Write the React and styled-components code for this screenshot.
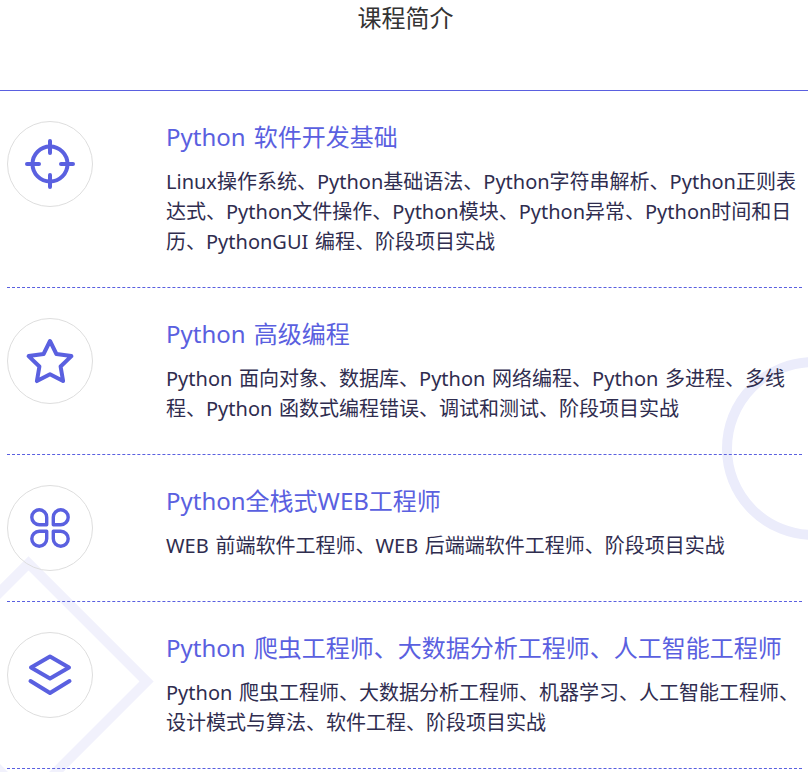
import React from "react";
import styled, { createGlobalStyle } from "styled-components";

const GlobalStyle = createGlobalStyle`
  html, body {
    margin: 0;
    padding: 0;
    background: #fff;
  }
  body {
    font-family: "Noto Sans", "Noto Sans CJK SC", sans-serif;
    font-kerning: none;
  }
`;

const courses = [
  {
    icon: "target",
    title: "Python 软件开发基础",
    text: "Linux操作系统、Python基础语法、Python字符串解析、Python正则表达式、Python文件操作、Python模块、Python异常、Python时间和日历、PythonGUI 编程、阶段项目实战"
  },
  {
    icon: "star",
    title: "Python 高级编程",
    text: "Python 面向对象、数据库、Python 网络编程、Python 多进程、多线程、Python 函数式编程错误、调试和测试、阶段项目实战"
  },
  {
    icon: "clover",
    title: "Python全栈式WEB工程师",
    text: "WEB 前端软件工程师、WEB 后端端软件工程师、阶段项目实战"
  },
  {
    icon: "layers",
    title: "Python 爬虫工程师、大数据分析工程师、人工智能工程师",
    text: "Python 爬虫工程师、大数据分析工程师、机器学习、人工智能工程师、设计模式与算法、软件工程、阶段项目实战"
  }
];

const CourseIcon = ({ name }) => {
  if (name === "target") {
    return (
      <IconSvg viewBox="0 0 50 50">
        <circle cx="25" cy="25" r="17.5" />
        <path d="M25 2v12M25 36v12M2 25h12M36 25h12" />
      </IconSvg>
    );
  }
  if (name === "star") {
    return (
      <IconSvg viewBox="0 0 50 50">
        <path d="M25 5l6.4 13 15 2.1-10.8 10.4 2.5 14.6-13.1-6.9-13.1 6.9 2.5-14.6L3.6 20.1l15-2.1z" />
      </IconSvg>
    );
  }
  if (name === "clover") {
    return (
      <IconSvg viewBox="0 0 50 50" $thin>
        <path d="M21.7 21.7H14.25A7.45 7.45 0 1 1 21.7 14.25Z" />
        <path d="M28.3 21.7H35.75A7.45 7.45 0 1 0 28.3 14.25Z" />
        <path d="M21.7 28.3H14.25A7.45 7.45 0 1 0 21.7 35.75Z" />
        <path d="M28.3 28.3H35.75A7.45 7.45 0 1 1 28.3 35.75Z" />
      </IconSvg>
    );
  }
  return (
    <IconSvg viewBox="0 0 50 50">
      <path d="M25 6.5l19 11-19 11-19-11z" />
      <path d="M5.5 31l19.5 12 19.5-12" />
    </IconSvg>
  );
};

const App = () => (
  <Page>
    <GlobalStyle />
    <Ring />
    <Diamond />
    <Heading>课程简介</Heading>
    <CourseList>
      {courses.map(course => (
        <CourseRow key={course.title}>
          <IconCircle>
            <CourseIcon name={course.icon} />
          </IconCircle>
          <CourseBody>
            <CourseTitle>{course.title}</CourseTitle>
            <CourseText>{course.text}</CourseText>
          </CourseBody>
        </CourseRow>
      ))}
    </CourseList>
  </Page>
);

export default App;

const Page = styled.div`
  position: relative;
  height: 772px;
  overflow: hidden;
  background: #fff;
`;

const Ring = styled.div`
  position: absolute;
  left: 722px;
  top: 357px;
  width: 183px;
  height: 183px;
  box-sizing: border-box;
  border: 10px solid #ebecfb;
  border-radius: 50%;
`;

const Diamond = styled.div`
  position: absolute;
  left: -60px;
  top: 593px;
  width: 177px;
  height: 177px;
  box-sizing: border-box;
  border: 10px solid #f1f1fc;
  transform: rotate(45deg);
`;

const Heading = styled.h2`
  position: relative;
  box-sizing: border-box;
  height: 91px;
  margin: 0;
  padding-left: 3px;
  border-bottom: 1px solid #5a60e0;
  color: #333;
  font-size: 24px;
  font-weight: 400;
  line-height: 36px;
  text-align: center;
`;

const CourseList = styled.div`
  position: relative;
  margin: 0 6px 0 7px;
`;

const CourseRow = styled.div`
  display: flex;
  align-items: flex-start;
  gap: 73px;
  padding: 30px 0;
  border-bottom: 1px dashed #5a60e0;
`;

const IconCircle = styled.div`
  display: flex;
  flex: none;
  align-items: center;
  justify-content: center;
  box-sizing: border-box;
  width: 86px;
  height: 86px;
  border: 1px solid #dedede;
  border-radius: 50%;
`;

const IconSvg = styled.svg`
  width: 50px;
  height: 50px;
  fill: none;
  stroke: #5a60e0;
  stroke-width: ${props => (props.$thin ? 3.4 : 4)};
  stroke-linecap: round;
  stroke-linejoin: round;
`;

const CourseBody = styled.div`
  flex: 1;
  min-width: 0;
`;

const CourseTitle = styled.h3`
  margin: 0 0 14px;
  color: #5a60e0;
  font-size: 24px;
  font-weight: 400;
  line-height: 32px;
  word-spacing: 2px;
`;

const CourseText = styled.p`
  margin: 0;
  color: #2f2d4f;
  font-size: 20px;
  line-height: 30px;
  word-spacing: 1.5px;
`;
